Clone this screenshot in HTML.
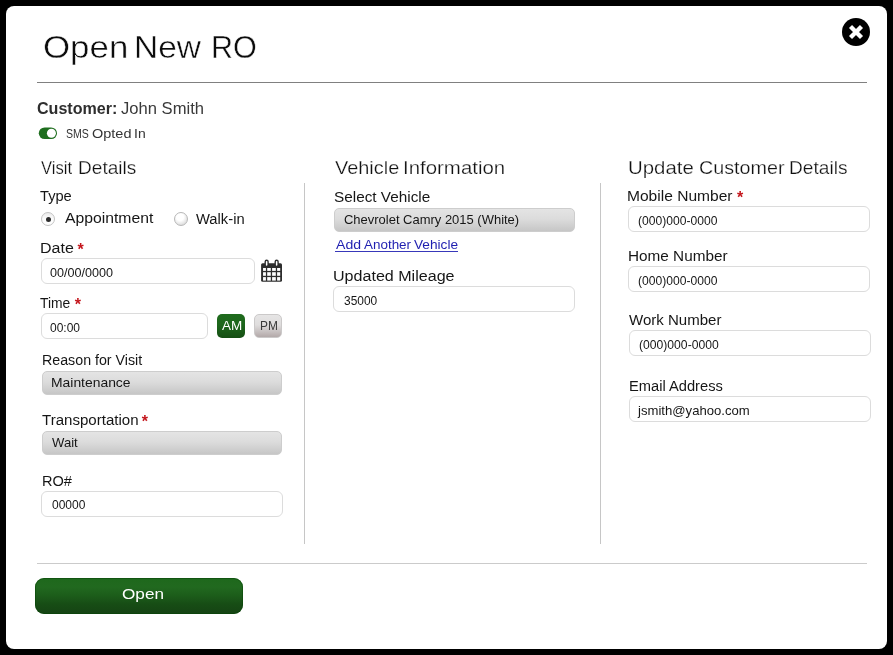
<!DOCTYPE html>
<html>
<head>
<meta charset="utf-8">
<title>Open New RO</title>
<style>
*{box-sizing:border-box;margin:0;padding:0}
html,body{width:893px;height:655px;overflow:hidden;background:#000;font-family:"Liberation Sans",sans-serif;color:#161616}
#modal{position:absolute;left:6px;top:6px;width:881px;height:643px;background:#fff;border-radius:8px}
.t{position:absolute;white-space:nowrap;line-height:1;transform-origin:0 0}
.hr{position:absolute;height:1px}
.vr{position:absolute;width:1px;background:#c6c6c6}
.inp{position:absolute;height:26px;border:1px solid #dcdcdc;border-radius:6px;background:#fff}
.sel{position:absolute;height:24px;border:1px solid #cdcdcd;border-radius:5px;background:linear-gradient(#e4e4e4 0%,#dcdcdc 45%,#d0d0d0 75%,#c6c6c6 100%)}
.req{color:#c4161c;font-weight:bold}
.radio{position:absolute;width:14px;height:14px;border-radius:50%;border:1px solid #c3c3c3;background:linear-gradient(#ebebeb 0%,#fbfbfb 45%,#ffffff 100%)}
.radio.off{border-color:#b8b8b8;background:radial-gradient(circle at 42% 34%,#ffffff 34%,#e9e9e9 62%,#c9c9c9 100%)}
.radio.on:after{content:"";position:absolute;left:3.8px;top:4px;width:5.4px;height:5.4px;border-radius:50%;background:#2c2c2c}
.btn{position:absolute;border-radius:5px}
</style>
</head>
<body>
<div id="modal"></div>

<!-- header -->
<svg id="close" style="position:absolute;left:842px;top:18px" width="28" height="28" viewBox="0 0 28 28"><circle cx="14" cy="14" r="14" fill="#000"/><path d="M8.5 8.5 L19.5 19.5 M19.5 8.5 L8.5 19.5" stroke="#fff" stroke-width="4.3" stroke-linecap="butt"/></svg>
<div class="hr" style="left:37px;top:82px;width:830px;background:#808080"></div>

<!-- customer toggle -->
<svg id="toggle" style="position:absolute;left:38px;top:126px" width="21" height="15" viewBox="0 0 21 15"><rect x="0.8" y="1.4" width="18.2" height="11.7" rx="5.85" fill="#1f6e1f"/><circle cx="13.4" cy="7.3" r="4.5" fill="#fff"/></svg>

<!-- column 1 -->
<div class="radio on" style="left:41px;top:212px"></div>
<div class="radio off" style="left:174px;top:212px"></div>
<div class="inp" style="left:41px;top:258px;width:214px"></div>
<svg id="cal" style="position:absolute;left:261px;top:259px" width="21" height="23" viewBox="0 0 21 23">
<rect x="0.1" y="4.2" width="20.9" height="18.6" rx="1.5" fill="#2d2d2d"/>
<g fill="#fff"><rect x="2.05" y="9.0" width="2.85" height="2.90"/><rect x="6.2" y="9.0" width="3.60" height="2.90"/><rect x="11.1" y="9.0" width="3.70" height="2.90"/><rect x="16.1" y="9.0" width="3.10" height="2.90"/><rect x="2.05" y="13.2" width="2.85" height="3.60"/><rect x="6.2" y="13.2" width="3.60" height="3.60"/><rect x="11.1" y="13.2" width="3.70" height="3.60"/><rect x="16.1" y="13.2" width="3.10" height="3.60"/><rect x="2.05" y="18.1" width="2.85" height="3.50"/><rect x="6.2" y="18.1" width="3.60" height="3.50"/><rect x="11.1" y="18.1" width="3.70" height="3.50"/><rect x="16.1" y="18.1" width="3.10" height="3.50"/></g>
<rect x="3.5" y="0.5" width="4.3" height="6.9" rx="2.15" fill="#2d2d2d"/><rect x="4.9" y="1.9" width="1.5" height="4.8" rx="0.75" fill="#fff"/>
<rect x="13.5" y="0.5" width="4.3" height="6.9" rx="2.15" fill="#2d2d2d"/><rect x="14.9" y="1.9" width="1.5" height="4.8" rx="0.75" fill="#fff"/>
</svg>
<div class="inp" style="left:41px;top:313px;width:167px"></div>
<div class="btn" id="am" style="left:217px;top:314px;width:28px;height:24px;background:linear-gradient(#1f6b1d 0%,#1e661c 45%,#154e13 100%)"></div>
<div class="btn" id="pm" style="left:254px;top:314px;width:28px;height:24px;border:1px solid #cbc9c9;background:linear-gradient(#e6e5e5 0%,#dfdddd 45%,#c3bcbc 80%,#b3a9a9 100%)"></div>
<div class="sel" style="left:42px;top:371px;width:240px"></div>
<div class="sel" style="left:42px;top:431px;width:240px"></div>
<div class="inp" style="left:41px;top:491px;width:242px"></div>
<div class="vr" style="left:304px;top:183px;height:361px"></div>

<!-- column 2 -->
<div class="sel" style="left:334px;top:208px;width:241px"></div>
<div class="inp" style="left:333px;top:286px;width:242px"></div>
<div style="position:absolute;left:335px;top:251px;width:123px;height:1px;background:#3838ba"></div>
<div class="vr" style="left:600px;top:183px;height:361px"></div>

<!-- column 3 -->
<div class="inp" style="left:628px;top:206px;width:242px"></div>
<div class="inp" style="left:628px;top:266px;width:242px"></div>
<div class="inp" style="left:629px;top:330px;width:242px"></div>
<div class="inp" style="left:629px;top:396px;width:242px"></div>

<!-- footer -->
<div class="hr" style="left:37px;top:563px;width:830px;background:#cbcbcb"></div>
<div id="open" style="position:absolute;left:35px;top:578px;width:208px;height:36px;border-radius:9px;background:linear-gradient(#1e681c 0%,#21691f 25%,#1c5c1a 50%,#174d15 72%,#154313 100%);box-shadow:inset 0 0 0 1px rgba(8,70,8,.55)"></div>

<!-- text -->
<div id="txt" style="position:absolute;left:0;top:0;width:893px;height:655px;will-change:transform;transform:translateZ(0)">
<div class="t" id="title1" style="left:42.82px;top:30.71px;font-size:32px;transform:scaleX(1.0892);color:#0c0c0c;-webkit-text-stroke:0.45px #fff">Open</div>
<div class="t" id="title2" style="left:133.66px;top:30.71px;font-size:32px;transform:scaleX(1.0459);color:#0c0c0c;-webkit-text-stroke:0.45px #fff">New</div>
<div class="t" id="title3" style="left:210.53px;top:30.71px;font-size:32px;transform:scaleX(0.9558);color:#0c0c0c;-webkit-text-stroke:0.45px #fff">RO</div>
<div class="t" id="cust_b" style="left:37.05px;top:99.86px;font-size:17px;transform:scaleX(0.9451);color:#2e2e2e"><b>Customer:</b></div>
<div class="t" id="cust_n" style="left:121.30px;top:99.86px;font-size:17px;transform:scaleX(0.9762);color:#3a3a3a">John Smith</div>
<div class="t" id="sms1" style="left:66.42px;top:127.84px;font-size:12px;transform:scaleX(0.8800);color:#333">SMS</div>
<div class="t" id="sms2" style="left:92.49px;top:127.84px;font-size:12px;transform:scaleX(1.2065);color:#333">Opted</div>
<div class="t" id="sms3" style="left:134.44px;top:127.84px;font-size:12px;transform:scaleX(1.1625);color:#333">In</div>
<div class="t" id="h1a" style="left:40.80px;top:158.17px;font-size:19px;transform:scaleX(0.8771);color:#111;-webkit-text-stroke:0.25px #fff">Visit</div>
<div class="t" id="h1b" style="left:77.79px;top:158.17px;font-size:19px;transform:scaleX(1.0036);color:#111;-webkit-text-stroke:0.25px #fff">Details</div>
<div class="t" id="l_type" style="left:39.90px;top:189.15px;font-size:14px;transform:scaleX(1.0467);">Type</div>
<div class="t" id="l_appt" style="left:64.80px;top:210.85px;font-size:14px;transform:scaleX(1.1241);">Appointment</div>
<div class="t" id="l_walk" style="left:196.10px;top:212.25px;font-size:14px;transform:scaleX(1.0533);">Walk-in</div>
<div class="t" id="l_date" style="left:39.66px;top:241.25px;font-size:14px;transform:scaleX(1.1429);">Date</div>
<div class="t" id="v_date" style="left:50.03px;top:266.00px;font-size:13px;transform:scaleX(0.9688);">00/00/0000</div>
<div class="t" id="l_time" style="left:40.20px;top:296.15px;font-size:14px;transform:scaleX(0.9900);">Time</div>
<div class="t" id="v_time" style="left:49.98px;top:321.20px;font-size:13px;transform:scaleX(0.9226);">00:00</div>
<div class="t" id="t_am" style="left:222.10px;top:319.00px;font-size:13px;transform:scaleX(1.0368);color:#fff">AM</div>
<div class="t" id="t_pm" style="left:259.98px;top:319.00px;font-size:13px;transform:scaleX(0.9167);color:#3a3a3a">PM</div>
<div class="t" id="l_reason" style="left:42.08px;top:352.75px;font-size:14px;transform:scaleX(1.0163);">Reason for Visit</div>
<div class="t" id="v_reason" style="left:51.43px;top:376.30px;font-size:13px;transform:scaleX(1.0685);">Maintenance</div>
<div class="t" id="l_trans" style="left:41.70px;top:412.75px;font-size:14px;transform:scaleX(1.0764);">Transportation</div>
<div class="t" id="v_trans" style="left:51.90px;top:436.00px;font-size:13px;transform:scaleX(1.0077);">Wait</div>
<div class="t" id="l_ro" style="left:41.86px;top:474.15px;font-size:14px;transform:scaleX(1.0393);">RO#</div>
<div class="t" id="v_ro" style="left:51.88px;top:497.50px;font-size:13px;transform:scaleX(0.9229);">00000</div>
<div class="t" id="h2a" style="left:334.70px;top:158.02px;font-size:19px;transform:scaleX(1.0492);color:#111;-webkit-text-stroke:0.25px #fff">Vehicle</div>
<div class="t" id="h2b" style="left:402.95px;top:158.02px;font-size:19px;transform:scaleX(1.0750);color:#111;-webkit-text-stroke:0.25px #fff">Information</div>
<div class="t" id="l_selv" style="left:333.91px;top:189.65px;font-size:14px;transform:scaleX(1.0943);">Select Vehicle</div>
<div class="t" id="v_veh" style="left:344.00px;top:212.90px;font-size:13px;transform:scaleX(0.9977);">Chevrolet Camry 2015 (White)</div>
<div class="t" id="lk1" style="left:335.50px;top:237.90px;font-size:13px;transform:scaleX(1.0818);color:#1f1fb0">Add</div>
<div class="t" id="lk2" style="left:364.20px;top:237.90px;font-size:13px;transform:scaleX(1.0333);color:#1f1fb0">Another</div>
<div class="t" id="lk3" style="left:414.20px;top:237.90px;font-size:13px;transform:scaleX(1.0512);color:#1f1fb0">Vehicle</div>
<div class="t" id="l_mil" style="left:333.45px;top:268.75px;font-size:14px;transform:scaleX(1.1481);">Updated Mileage</div>
<div class="t" id="v_mil" style="left:343.78px;top:294.10px;font-size:13px;transform:scaleX(0.9171);">35000</div>
<div class="t" id="h3a" style="left:627.73px;top:158.32px;font-size:19px;transform:scaleX(1.0733);color:#111;-webkit-text-stroke:0.25px #fff">Update</div>
<div class="t" id="h3b" style="left:699.06px;top:158.32px;font-size:19px;transform:scaleX(1.0383);color:#111;-webkit-text-stroke:0.25px #fff">Customer</div>
<div class="t" id="h3c" style="left:788.79px;top:158.32px;font-size:19px;transform:scaleX(1.0073);color:#111;-webkit-text-stroke:0.25px #fff">Details</div>
<div class="t" id="l_mob" style="left:627.09px;top:189.05px;font-size:14px;transform:scaleX(1.1117);">Mobile Number</div>
<div class="t" id="v_mob" style="left:637.77px;top:213.80px;font-size:13px;transform:scaleX(0.9310);">(000)000-0000</div>
<div class="t" id="l_home" style="left:627.61px;top:249.05px;font-size:14px;transform:scaleX(1.0933);">Home Number</div>
<div class="t" id="v_home" style="left:637.77px;top:274.00px;font-size:13px;transform:scaleX(0.9321);">(000)000-0000</div>
<div class="t" id="l_work" style="left:629.30px;top:312.75px;font-size:14px;transform:scaleX(1.0733);">Work Number</div>
<div class="t" id="v_work" style="left:638.67px;top:337.80px;font-size:13px;transform:scaleX(0.9345);">(000)000-0000</div>
<div class="t" id="l_email" style="left:628.55px;top:378.75px;font-size:14px;transform:scaleX(1.0489);">Email Address</div>
<div class="t" id="v_email" style="left:638.00px;top:404.10px;font-size:13px;transform:scaleX(1.0091);">jsmith@yahoo.com</div>
<div class="t" id="t_open" style="left:121.88px;top:587.25px;font-size:14px;transform:scaleX(1.2250);color:#fff">Open</div>
<div class="t req" style="left:77.5px;top:241.8px;font-size:16px">*</div>
<div class="t req" style="left:74.7px;top:297.2px;font-size:16px">*</div>
<div class="t req" style="left:141.8px;top:413.5px;font-size:16px">*</div>
<div class="t req" style="left:737.0px;top:189.5px;font-size:16px">*</div>

</div>
</body>
</html>
